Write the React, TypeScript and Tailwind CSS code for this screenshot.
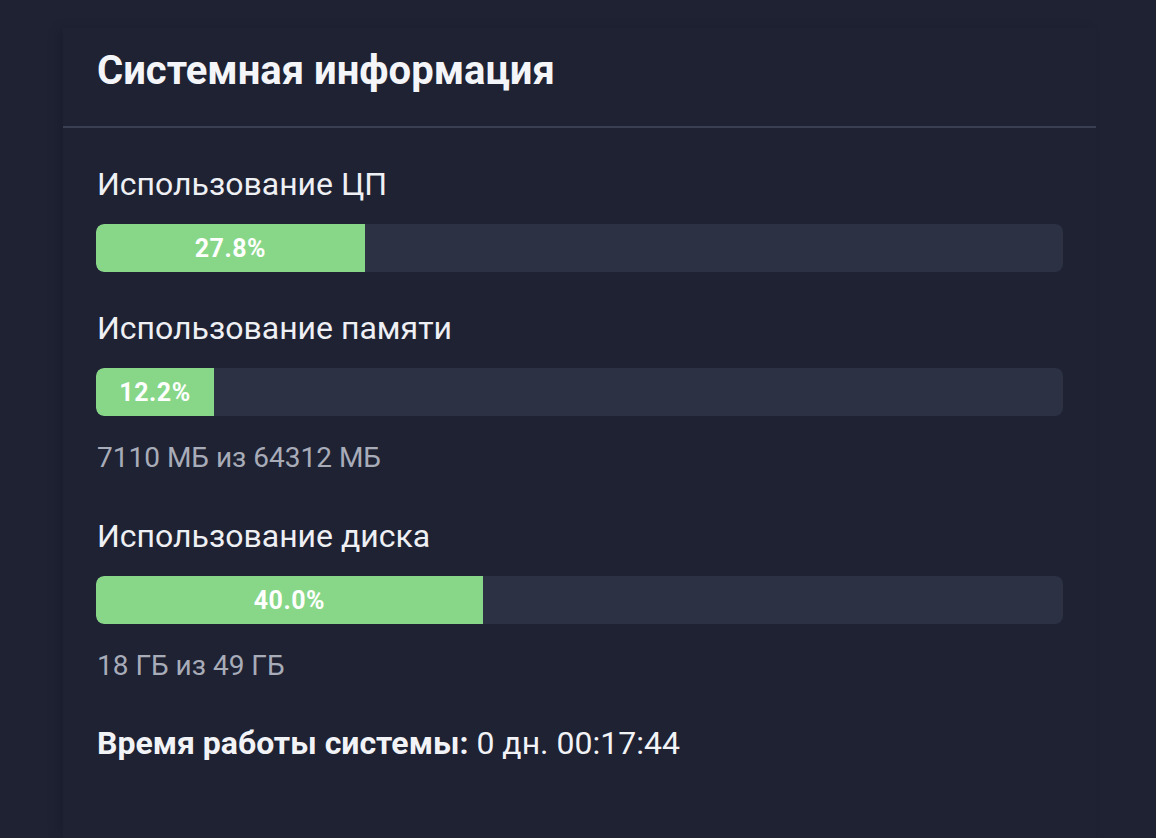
import React from 'react';

type Usage = {
  label: string;
  percent: number;
  detail?: string;
};

const usages: Usage[] = [
  { label: 'Использование ЦП', percent: 27.8 },
  { label: 'Использование памяти', percent: 12.2, detail: '7110 МБ из 64312 МБ' },
  { label: 'Использование диска', percent: 40.0, detail: '18 ГБ из 49 ГБ' },
];

const UsageBar = ({ percent }: { percent: number }) => (
  <div className="h-[48px] w-full rounded-[8px] bg-[#2d3144] overflow-hidden flex">
    <div
      className="h-full rounded-l-[8px] bg-[#88d789] flex items-center justify-center"
      style={{ width: `${percent}%` }}
    >
      <span className="text-[25px] font-bold text-white leading-none tracking-[0.5px]">{percent.toFixed(1)}%</span>
    </div>
  </div>
);

export default function App() {
  return (
    <div
      className="min-h-[838px] w-full bg-[#1e2233] pt-[28px] pl-[63px] pr-[60px] overflow-hidden"
      style={{ fontFamily: 'Roboto, "Noto Sans", sans-serif' }}
    >
      <div className="w-[1033px] min-h-[810px] bg-[#1e2233] shadow-[-6px_0_10px_rgba(0,0,0,0.12)]">
        <div className="px-[34px] pt-[15px] pb-[27px] border-b-2 border-[#3a3f52]">
          <h2 className="text-[40px] leading-[56px] font-bold text-[#f4f5f8]">Системная информация</h2>
        </div>

        <div className="px-[33px] pt-[32px]">
          {usages.map((u, i) => (
            <div
              key={u.label}
              className={i === 0 ? '' : usages[i - 1].detail ? 'mt-[34px]' : 'mt-[32px]'}
            >
              <div className="text-[32px] leading-[48px] text-[#eef0f4] pl-[1px]">{u.label}</div>
              <div className="mt-[16px]">
                <UsageBar percent={u.percent} />
              </div>
              {u.detail && (
                <div className="mt-[22px] text-[28px] leading-[40px] text-[#a8acb8] pl-[1px]">{u.detail}</div>
              )}
            </div>
          ))}

          <div className="mt-[33px] text-[32px] leading-[48px] text-[#f2f3f6] pl-[1px]">
            <span className="font-bold">Время работы системы:</span> 0 дн. 00:17:44
          </div>
        </div>
      </div>
    </div>
  );
}
